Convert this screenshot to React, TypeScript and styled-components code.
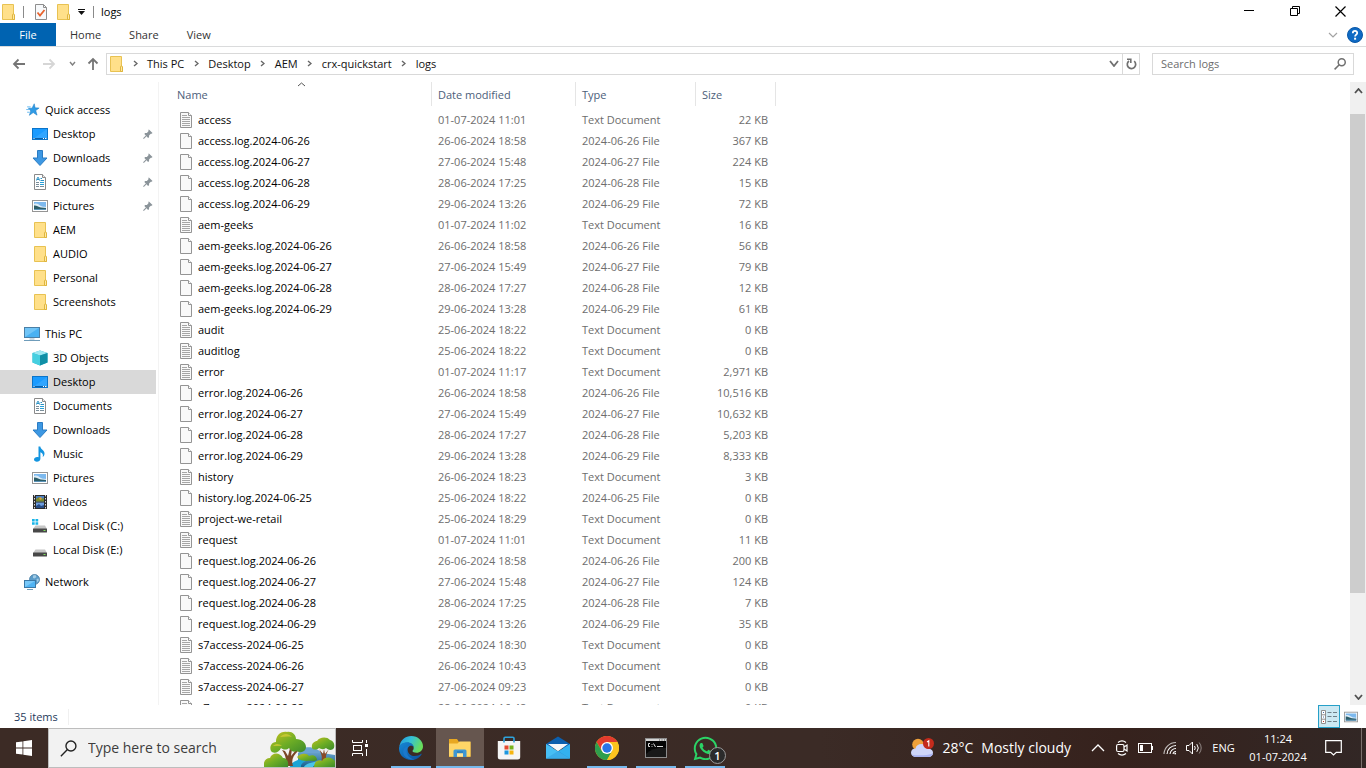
import React from "react";
import styled, { createGlobalStyle } from "styled-components";
import { FaWhatsapp } from "react-icons/fa";

const GlobalStyle = createGlobalStyle`
  *, *::before, *::after { box-sizing: border-box; }
  body {
    margin: 0;
    background: #fff;
    color: #000;
    font: 11px/16px "Open Sans", "Noto Sans", sans-serif;
  }
  button, input { font: inherit; color: inherit; }
  button { border: 0; padding: 0; background: none; }
  svg { display: block; flex: none; }
`;

const Shell = styled.div`
  display: flex;
  flex-direction: column;
  height: 100vh;
  overflow: hidden;
`;

/* ---------- title bar ---------- */

const TitleBar = styled.header`
  display: flex;
  align-items: center;
  height: 23px;
  flex: none;
`;

const QuickTools = styled.div`
  display: flex;
  align-items: center;
  flex: 1;
`;

const QuickButton = styled.button<{ $w: number; $gap?: number }>`
  display: flex;
  justify-content: center;
  width: ${(p) => p.$w}px;
  margin-right: ${(p) => p.$gap ?? 0}px;
`;

const Divider = styled.span`
  width: 1px;
  height: 12px;
  background: #8a8a8a;
`;

const WindowTitle = styled.h1`
  margin: 0 0 0 7px;
  font-size: 11px;
  line-height: 16px;
  font-weight: 400;
`;

const CaptionButton = styled.button`
  display: flex;
  align-items: center;
  justify-content: center;
  width: 46px;
  height: 20px;
  &:last-child { margin-right: 2px; }
`;

/* ---------- ribbon tabs ---------- */

const Ribbon = styled.nav`
  display: flex;
  align-items: center;
  flex: none;
  height: 24px;
  border-bottom: 1px solid #dadbdc;
`;

const RibbonTab = styled.button<{ $primary?: boolean }>`
  height: 23px;
  min-width: ${(p) => (p.$primary ? 56 : 0)}px;
  padding: 0 14px;
  color: ${(p) => (p.$primary ? "#fff" : "#333")};
  background: ${(p) => (p.$primary ? "#0063b1" : "transparent")};
`;

const RibbonEnd = styled.div`
  display: flex;
  align-items: center;
  gap: 9px;
  margin-left: auto;
  padding-right: 3px;
`;

/* ---------- address row ---------- */

const AddressRow = styled.div`
  display: flex;
  align-items: center;
  flex: none;
  height: 35px;
  padding: 0 12px 2px 0;
`;

const NavButtons = styled.div`
  display: flex;
  align-items: center;
  width: 106px;
  padding-left: 12px;
`;

const NavButton = styled.button<{ $gap?: number }>`
  margin-right: ${(p) => p.$gap ?? 0}px;
`;

const AddressBox = styled.div`
  display: flex;
  align-items: center;
  flex: 1;
  height: 22px;
  border: 1px solid #d9d9d9;
`;

const Crumbs = styled.ol`
  display: flex;
  align-items: center;
  flex: 1;
  margin: 0;
  padding: 0 0 0 3px;
  list-style: none;
`;

const Crumb = styled.li`
  display: flex;
  align-items: center;
`;

const CrumbArrow = styled.span`
  display: flex;
  justify-content: center;
  width: 24px;
`;

const CrumbLink = styled.a`
  color: #111;
  text-decoration: none;
`;

const BoxButton = styled.button<{ $line?: boolean }>`
  display: flex;
  align-items: center;
  justify-content: center;
  width: ${(p) => (p.$line ? 17 : 16)}px;
  height: 20px;
  border-left: ${(p) => (p.$line ? "1px solid #d9d9d9" : "0")};
`;

const SearchBox = styled.label`
  display: flex;
  align-items: center;
  width: 202px;
  height: 22px;
  margin-left: 12px;
  padding: 0 7px 0 8px;
  border: 1px solid #d9d9d9;
`;

const SearchInput = styled.input`
  flex: 1;
  min-width: 0;
  padding: 0;
  border: 0;
  outline: 0;
  background: none;
  &::placeholder { color: #6d6d6d; opacity: 1; }
`;

/* ---------- body ---------- */

const Body = styled.main`
  display: flex;
  flex: 1;
  min-height: 0;
`;

const Sidebar = styled.nav`
  flex: none;
  width: 159px;
  padding: 16px 2px 0 0;
  border-right: 1px solid #f3f3f3;
  overflow: hidden;
`;

const SideGroup = styled.ul`
  margin: 0 0 8px;
  padding: 0;
  list-style: none;
`;

const SideLink = styled.a<{ $root?: boolean; $selected?: boolean }>`
  display: flex;
  align-items: center;
  height: 24px;
  padding: 0 3px 0 ${(p) => (p.$root ? 24 : 32)}px;
  color: #000;
  text-decoration: none;
  background: ${(p) => (p.$selected ? "#d9d9d9" : "transparent")};
`;

const SideLabel = styled.span`
  flex: 1;
  padding-left: 5px;
  white-space: nowrap;
`;

const FilePane = styled.section`
  flex: 1;
  min-width: 0;
  overflow: hidden;
`;

const FileTable = styled.table`
  width: 617px;
  table-layout: fixed;
  border-collapse: collapse;
`;

const HeadCell = styled.th<{ $w: number }>`
  position: relative;
  width: ${(p) => p.$w}px;
  height: 27px;
  padding: 0 0 3px;
  font-weight: 400;
  text-align: left;
  color: #4c607a;
`;

const HeadLabel = styled.div<{ $indent?: number }>`
  height: 24px;
  padding-left: ${(p) => p.$indent ?? 6}px;
  line-height: 26px;
  border-right: 1px solid #e5e5e5;
`;

const SortMark = styled.span`
  position: absolute;
  top: 0;
  left: 138px;
`;

const Row = styled.tr`
  height: 21px;
`;

const Cell = styled.td<{ $right?: boolean }>`
  padding: 0 ${(p) => (p.$right ? 8 : 0)}px 0 6px;
  text-align: ${(p) => (p.$right ? "right" : "left")};
  color: #6d6d6d;
  white-space: nowrap;
`;

const FileName = styled.div`
  display: flex;
  align-items: center;
  gap: 6px;
  padding-left: 15px;
  color: #000;
`;

const Scrollbar = styled.div`
  display: flex;
  flex-direction: column;
  flex: none;
  width: 16px;
  background: #f0f0f0;
`;

const ScrollButton = styled.button`
  display: flex;
  align-items: center;
  justify-content: center;
  height: 17px;
`;

const ScrollSpace = styled.div<{ $part: number }>`
  flex: ${(p) => p.$part} 0 0;
`;

const ScrollThumb = styled.div`
  flex: 479 0 0;
  margin-right: 1px;
  background: #cdcdcd;
`;

/* ---------- status bar ---------- */

const StatusBar = styled.footer`
  display: flex;
  align-items: center;
  flex: none;
  height: 23px;
  padding: 0 8px 0 14px;
  color: #1e395b;
`;

const StatusText = styled.span`
  padding-right: 10px;
  border-right: 1px solid #f0f0f0;
`;

const ViewButtons = styled.div`
  display: flex;
  align-items: center;
  gap: 3px;
  margin-left: auto;
`;

const ViewButton = styled.button<{ $on?: boolean }>`
  display: flex;
  align-items: center;
  justify-content: center;
  width: ${(p) => (p.$on ? 22 : 15)}px;
  height: 23px;
  border: ${(p) => (p.$on ? "1px solid #26a0c8" : "0")};
  background: ${(p) => (p.$on ? "#cce8f2" : "transparent")};
`;

/* ---------- taskbar ---------- */

const Taskbar = styled.footer`
  display: flex;
  flex: none;
  height: 40px;
  color: #fff;
  background: linear-gradient(90deg, #3c2b25 0%, #3b2b26 60%, #36221d 82%, #322725 100%);
`;

const Tile = styled.button<{ $active?: boolean; $open?: boolean }>`
  position: relative;
  display: flex;
  align-items: center;
  justify-content: center;
  width: 48px;
  background: ${(p) => (p.$active ? "#66564f" : "transparent")};
  &::after {
    content: "";
    position: absolute;
    bottom: 0;
    left: ${(p) => (p.$active ? 0 : 4)}px;
    right: ${(p) => (p.$active ? 0 : 4)}px;
    height: 2px;
    background: ${(p) => (p.$open || p.$active ? "#76b9ed" : "transparent")};
  }
`;

const AppTiles = styled.div`
  display: flex;
  gap: 1px;
  margin-left: 3px;
`;

const TaskSearch = styled.label`
  display: flex;
  align-items: center;
  width: 288px;
  padding-left: 11px;
  border: 1px solid #bdbdbd;
  background: #f2f2f2;
  overflow: hidden;
`;

const TaskInput = styled.input`
  flex: 1;
  min-width: 0;
  padding: 0 0 0 11px;
  border: 0;
  outline: 0;
  background: none;
  font-size: 14px;
  line-height: 20px;
  &::placeholder { color: #3d3d3d; opacity: 1; }
`;

const Badge = styled.span`
  position: absolute;
  right: 3px;
  bottom: 4px;
  width: 17px;
  height: 17px;
  border: 1px solid #9a9a9a;
  border-radius: 50%;
  background: #2b2b2b;
  color: #fff;
  font-size: 11px;
  line-height: 15px;
  font-weight: 600;
  text-align: center;
`;

const Tray = styled.div`
  display: flex;
  align-items: stretch;
  margin-left: auto;
`;

const TrayButton = styled.button<{ $w?: number }>`
  display: flex;
  align-items: center;
  justify-content: center;
  width: ${(p) => (p.$w ? p.$w + "px" : "auto")};
`;

const Weather = styled(TrayButton)`
  gap: 8px;
  margin-right: 15px;
  font-size: 14px;
  line-height: 20px;
`;

const Clock = styled.div`
  display: flex;
  flex-direction: column;
  align-items: center;
  justify-content: center;
  width: 74px;
  line-height: 18px;
`;

const ShowDesktop = styled.button`
  width: 5px;
  margin-left: 9px;
  border-left: 1px solid #7a706d;
`;

/* ---------- icons ---------- */

const FolderIcon = ({ w = 16 }: { w?: 13 | 16 }) => (
  <svg width={w} height="16" viewBox={w === 13 ? "2 0 13 16" : "0 0 16 16"}>
    <path d="M2.500.5h11v11h1v4h-12z" fill="#ffe08a" stroke="#e8c252" />
    <path d="M12.500 15.500v-4.500q0-1 1-1t1 1v4.500z" fill="#ffe9a6" stroke="#dfb53d" />
  </svg>
);

const CheckDocIcon = () => (
  <svg width="12" height="16" viewBox="0 0 12 16">
    <path d="M.5.5h8l3 3v12H.5z" fill="#f7f9fb" stroke="#8e8e8e" />
    <path d="M8.500.5v3h3" fill="none" stroke="#8e8e8e" />
    <path d="M2.500 8.500l2.500 3 4.500-5.500" fill="none" stroke="#e8622c" strokeWidth="1.800" />
  </svg>
);

const Chevron = ({
  dir, w = 7, color = "#666", weight = 1.4, h,
}: { dir: "up" | "down" | "right"; w?: number; h?: number; color?: string; weight?: number }) => {
  const half = w / 2;
  const depth = h ?? Math.ceil(half) + 1;
  const m = 1;
  if (dir === "right") {
    return (
      <svg width={depth} height={w} viewBox={`0 0 ${depth} ${w}`}>
        <path d={`M${m} ${m}L${depth - m} ${half}L${m} ${w - m}`} fill="none" stroke={color} strokeWidth={weight} />
      </svg>
    );
  }
  const [a, b] = dir === "up" ? [depth - m, m] : [m, depth - m];
  return (
    <svg width={w} height={depth} viewBox={`0 0 ${w} ${depth}`}>
      <path d={`M${m} ${a}L${half} ${b}L${w - m} ${a}`} fill="none" stroke={color} strokeWidth={weight} />
    </svg>
  );
};

const ArrowIcon = ({ dir, color }: { dir: "left" | "right" | "up"; color: string }) => {
  const turn = { left: 0, up: 90, right: 180 }[dir];
  return (
    <svg width="14" height="14" viewBox="0 0 14 14">
      <path
        d="M13 7H2M6.500 2.500L2 7l4.500 4.500"
        transform={`rotate(${turn} 7 7)`}
        fill="none"
        stroke={color}
        strokeWidth="1.800"
      />
    </svg>
  );
};

const RefreshIcon = () => (
  <svg width="11" height="12" viewBox="0 0 11 12">
    <path d="M8.200 3.200A4.200 4.200 0 1 1 3 3" fill="none" stroke="#707070" strokeWidth="1.700" />
    <path d="M1 1.200h3.800V5" fill="none" stroke="#707070" strokeWidth="1.600" />
  </svg>
);

const LensIcon = ({ size, color, weight }: { size: number; color: string; weight: number }) => (
  <svg width={size} height={size} viewBox="0 0 16 16">
    <circle cx="10.300" cy="5.700" r="4.700" fill="none" stroke={color} strokeWidth={weight} />
    <path d="M7 9L.8 15.200" stroke={color} strokeWidth={weight} />
  </svg>
);

const HelpIcon = () => (
  <svg width="16" height="16" viewBox="0 0 16 16">
    <circle cx="8" cy="8" r="7.500" fill="#0f6ac4" stroke="#0a58a8" />
    <path d="M5.800 6.200C5.800 3.200 10.300 3.300 10.200 6c0 1.600-2.100 1.700-2.100 3.500" fill="none" stroke="#fff" strokeWidth="1.800" />
    <rect x="7.100" y="10.700" width="2" height="2" fill="#fff" />
  </svg>
);

const StarIcon = () => (
  <svg width="16" height="16" viewBox="-2 -1 18 18">
    <path d="M9.500 1l1 4.600 4.500.2-3.800 2.900 1.500 5.100-4.300-2.900L4 14l1.600-5L3 6h4z" fill="#2f9be6" stroke="#1c7cc4" strokeWidth=".6" />
    <path d="M1.500 4.500h4M.5 7.500h4M1.500 10.500h3" stroke="#5bb5f0" />
  </svg>
);

const DesktopIcon = () => (
  <svg width="16" height="16" viewBox="0 0 16 16">
    <rect x=".5" y="2.500" width="15" height="11" fill="#1a9bff" stroke="#0b74c9" />
    <path d="M1 13L15 3v9H1z" fill="#45b0ff" opacity=".5" />
    <path d="M1 12.500h14" stroke="#0a5fa8" />
    <path d="M1.500 12.500h1M11 12.500h1M13 12.500h1.500" stroke="#fff" />
  </svg>
);

const DownloadIcon = () => (
  <svg width="16" height="16" viewBox="0 0 16 16">
    <path d="M5.500.5h5v7.500h4.500L8 15.500 1 8h4.500z" fill="#3d98e3" stroke="#2b7cc4" />
  </svg>
);

const DocumentIcon = () => (
  <svg width="16" height="16" viewBox="0 0 16 16">
    <path d="M2.500.5h8l3 3v12h-11z" fill="#fff" stroke="#8a8a8a" />
    <path d="M10.500.5v3h3" fill="#eee" stroke="#8a8a8a" />
    <path d="M4.500 6.500l1-3h1l1 3M5 5.500h2M8.500 4.500h1.500M8.500 6.500h3.500" fill="none" stroke="#2a91c4" />
    <path d="M4 8.500h3M4 10.500h3M4 12.500h3M8 12.500h4" stroke="#7a8d99" />
    <path d="M8 8.500h4M8 10.500h4" stroke="#28a0d8" />
  </svg>
);

const PictureIcon = ({ w = 16 }: { w?: number }) => (
  <svg width={w} height={w} viewBox="0 0 16 16">
    <rect x=".5" y="2.500" width="15" height="11" fill="#fff" stroke="#959595" />
    <rect x="2" y="4" width="12" height="8" fill="#7db9ee" />
    <path d="M2 6c3-1 4 0 6 1.500s4 1 6 1.500v1H2z" fill="#dcecf7" />
    <path d="M2 7.500c2-.5 4 1 7 2l5 .5v2H2z" fill="#2c5d68" />
    <path d="M2 11h12v1H2z" fill="#5a93b8" />
  </svg>
);

const ThisPcIcon = () => (
  <svg width="16" height="16" viewBox="0 0 16 16">
    <rect x=".5" y="1.500" width="15" height="10" fill="#49b1f2" stroke="#4a7fa6" />
    <path d="M1 11L15 2H1z" fill="#8cd2fa" opacity=".6" />
    <path d="M5.500 12h5v2h-5z" fill="#c9d9e4" />
    <path d="M0 14.500h16" stroke="#6f9cba" />
  </svg>
);

const CubeIcon = () => (
  <svg width="16" height="16" viewBox="0 0 16 16">
    <path d="M8 .5l7.500 2.500v9.500L8 15.500.5 12.500V3z" fill="#2ab8cf" />
    <path d="M.5 3L8 .5 15.500 3 8 5.500z" fill="#9fe8f2" />
    <path d="M.5 3L8 5.500v10L.5 12.500z" fill="#46cfe0" />
    <path d="M8 5.500L15.500 3v9.500L8 15.500z" fill="#108fa6" />
  </svg>
);

const MusicIcon = () => (
  <svg width="16" height="16" viewBox="0 0 16 16">
    <path d="M6.500.5h1.800c.3 3 4.700 3.800 4.200 7.500-.2 1.500-1 2.500-1.800 3 .8-2.500-.2-4-2.300-4.800v6.500c0 2-1.800 3-3.500 3-1.600 0-2.900-.8-2.900-2.200 0-2 2.500-3 4.500-2.300z" fill="#1495e0" />
  </svg>
);

const VideoIcon = () => (
  <svg width="16" height="16" viewBox="0 0 16 16">
    <rect x="1" y="1" width="14" height="14" fill="#2c2c2c" />
    <path d="M2.500 1v14M13.500 1v14" stroke="#ddd" strokeDasharray="1.500 1.500" />
    <rect x="4" y="2" width="8" height="5.500" fill="#4b7fc2" />
    <rect x="4" y="8.500" width="8" height="5.500" fill="#6c9de0" />
    <path d="M4 5l3-2 2 2 3-1v3.500H4z" fill="#7c8a2c" />
    <path d="M4 12l3-2 2 2 3-1v3H4z" fill="#274c86" />
    <circle cx="8.500" cy="4.500" r="1.200" fill="#d9a13a" />
  </svg>
);

const DiskIcon = ({ system }: { system?: boolean }) => (
  <svg width="16" height="16" viewBox="0 0 16 16">
    {system && <path d="M0 1h2.700v2.500H0zM3.500 1h2.700v2.500H3.500zM0 4.300h2.700v2.500H0zM3.500 4.300h2.700v2.500H3.500z" fill="#19b5e8" />}
    <path d="M3.500 7.500h9.500L15 11H1z" fill="#c6c6c6" />
    <rect x="1" y="10.500" width="14" height="4" rx=".6" fill="#484848" />
    <rect x="11.500" y="12" width="2" height="1" fill="#7ee05c" />
  </svg>
);

const NetworkIcon = () => (
  <svg width="16" height="16" viewBox="0 0 16 16">
    <circle cx="10.500" cy="5.500" r="5" fill="#5b9cc9" stroke="#4b7fa4" strokeWidth=".8" />
    <path d="M9 1.500l2.500-.5 1 2-2 1.500-1.500-.5zM12.500 5l2-.5.3 2-1.500 2z" fill="#b5d8ec" opacity=".8" />
    <rect x=".5" y="6.500" width="11" height="7" fill="#4fb3f4" stroke="#3a78a6" />
    <path d="M1 13L11 7H1z" fill="#95d6fb" opacity=".6" />
    <path d="M3 15.500h6" stroke="#6f9cba" />
  </svg>
);

const PinIcon = () => (
  <svg width="10" height="10" viewBox="0 0 11 11">
    <path d="M6.500.5l4 4-1 .8-.8-.2L6.800 7l-.2 2-1 .8L1.500 5.400l.8-1 2-.1L6.200 2.200 5.800 1.200z" fill="#8b949a" />
    <path d="M3.500 7.500L.5 10.500" stroke="#8b949a" strokeWidth="1.200" />
  </svg>
);

const FileIcon = ({ text }: { text: boolean }) => (
  <svg width="12" height="16" viewBox="0 0 12 16">
    <path d="M.5.5h8l3 3v12H.5z" fill="#f9f9f9" stroke="#949494" />
    <path d="M8.500.5v3h3" fill="#fff" stroke="#949494" />
    {text && <path d="M2 3.500h5M2 5.500h8M2 7.500h8M2 9.500h8M2 11.500h8M2 13.500h8" stroke="#a6a6a6" />}
  </svg>
);

const DetailsIcon = () => (
  <svg width="17" height="14" viewBox="0 0 17 14">
    <path d="M.5.500h4v13h-4zM.5 4.800h4M.5 9.200h4" fill="#fff" stroke="#8f8f8f" />
    <path d="M2 2.500h1M2 7h1" stroke="#4a6fa5" />
    <path d="M2 11.500h1" stroke="#c0392b" />
    <path d="M6.500 2.500h4M12 2.500h4M6.500 6.500h4M12 6.500h4M6.500 11.500h4M12 11.500h4" stroke="#6f7f88" />
  </svg>
);

const StartIcon = () => (
  <svg width="16" height="16" viewBox="0 0 16 16" fill="#fff">
    <path d="M0 2.300L6.500 1.400v6.100H0zM7.300 1.300L16 0v7.500H7.300zM0 8.400h6.500v6.200L0 13.700zM7.300 8.400H16V16l-8.700-1.300z" />
  </svg>
);

const TreesArt = () => (
  <svg width="71" height="38" viewBox="0 0 71 38">
    <defs>
      <linearGradient id="leaf" x1="0" y1="0" x2="1" y2="1">
        <stop offset="0" stopColor="#c9bf1e" />
        <stop offset=".5" stopColor="#6fae25" />
        <stop offset="1" stopColor="#3c8a2b" />
      </linearGradient>
      <linearGradient id="water" x1="0" y1="0" x2="0" y2="1">
        <stop offset="0" stopColor="#7fb4dc" />
        <stop offset="1" stopColor="#14608f" />
      </linearGradient>
    </defs>
    <path d="M34 38V24c6-7 18-5 24 0l13 2v12z" fill="url(#water)" />
    <path d="M37 20c8-4 16-1 21 4H38z" fill="#6aa3d2" />
    <path d="M26 38c0-7 16-8 14-12l6 1c2 4-10 5-9 11z" fill="#1ba4d6" />
    <path d="M40 38c2-5 14-5 18-7l4 2c-6 2-12 2-13 5z" fill="#48c4ea" />
    <path d="M20 37c3-6 2-10-2-16l3 1 3 5 2-8 2 1-1 7 5-6 2 1c-5 5-7 9-5 15z" fill="#7a4526" />
    <path d="M57 33c2-5 0-9-2-13l4 5 1-5 1 5 4-5c-3 5-4 8-2 13z" fill="#8b4a28" />
    <path d="M7 22c-2-5 1-9 5-9 0-6 4-11 11-10 5-1 9 3 9 7 6 0 10 4 10 8s-5 7-9 4c-3 2-6 0-8-3-3 3-7 1-8 0-2 5-8 6-10 3z" fill="url(#leaf)" />
    <path d="M16 8c4-4 8-4 12 0-4-1-8 0-12 0zM9 17c3-3 7-2 9 0z" fill="#e2d23b" opacity=".6" />
    <path d="M48 19c-1-5 3-7 5-7 2-4 10-5 13-1 4 1 5 5 4 8-2 3-6 2-8 0-3 2-5 1-7 0-2 2-6 2-7 0z" fill="url(#leaf)" />
    <path d="M0 38c-1-6 2-9 6-9 2-6 10-6 13 0 4 0 6 4 5 9z" fill="url(#leaf)" />
    <path d="M33 28c4-4 10-4 12-1 5-2 8 1 8 4-3 2-8 0-10 1-4 0-8-1-10-4z" fill="url(#leaf)" />
    <path d="M50 38c0-5 4-8 8-6 3-5 10-4 13 0v6z" fill="url(#leaf)" />
  </svg>
);

const TaskViewIcon = () => (
  <svg width="16" height="16" viewBox="0 0 16 16" fill="none" stroke="#fff">
    <path d="M.5 0v2.500h10V0M.5 16v-2.500h10V16" />
    <rect x="1.500" y="5.500" width="8" height="5" />
    <path d="M14.500 0v3M14.500 9v7" />
    <rect x="13" y="4" width="3" height="3" fill="#fff" stroke="none" />
  </svg>
);

const EdgeIcon = () => (
  <svg width="24" height="24" viewBox="0 0 24 24">
    <defs>
      <linearGradient id="edgeTop" x1="0" y1="0" x2="1" y2=".4">
        <stop offset="0" stopColor="#2196e3" />
        <stop offset=".5" stopColor="#35c1d6" />
        <stop offset="1" stopColor="#68dd5c" />
      </linearGradient>
      <linearGradient id="edgeLow" x1="0" y1="0" x2="1" y2="1">
        <stop offset="0" stopColor="#1587d6" />
        <stop offset="1" stopColor="#0c4f9b" />
      </linearGradient>
    </defs>
    <path d="M.3 10.500C1.500 4 6.500 0 12.200 0 19 0 24 5 24 10.300c0 4-3 6.500-6.500 6.500-2.300 0-4-.8-4-1.700s1.200-1.200 1.200-3.200C14.700 9 12 6.800 8.700 6.800 4.800 6.800 1.500 8.500.3 10.500z" fill="url(#edgeTop)" />
    <path d="M0 12C.3 8.500 4 6.300 8.200 6.300c3.500 0 6.300 2.300 6.500 5-1.200-1.500-2.700-1.800-4-1.200-4 2-2.200 10 4.800 10 3 0 5-1 6.500-2.300.6-.3.800.2.500.7C20.500 22 16.500 24 12 24 5 24-.3 18.800 0 12z" fill="url(#edgeLow)" />
    <path d="M8.500 11.500C6 16 9 22.500 15.500 23.300 11 24.500 5.500 22 4.300 17.300 3.500 13.500 6 10.500 10 10c-.6.400-1.100.9-1.500 1.500z" fill="#1b78cc" />
  </svg>
);

const ExplorerIcon = () => (
  <svg width="24" height="24" viewBox="0 0 24 24">
    <path d="M1 3h8l2 3h11.500v15H1z" fill="#e8a821" />
    <path d="M1 7.500h8.500l2-2H22.500v15H1z" fill="#ffd667" />
    <path d="M5.500 21v-6q0-1.500 1.500-1.500h10q1.500 0 1.500 1.500v6h-3.500v-3.500h-6V21z" fill="#3f97d3" />
    <path d="M9 17.500h6v3H9z" fill="#ffe7a0" />
    <path d="M9 16h6" stroke="#1e73b0" />
  </svg>
);

const StoreIcon = () => (
  <svg width="24" height="24" viewBox="0 0 24 24">
    <path d="M.8 5h22.400v16q0 2.500-2.500 2.500H3.300Q.8 23.500.8 21z" fill="#f5f5f5" />
    <path d="M7 6.500V2.500Q7 1.300 8.200 1.300h7.600q1.200 0 1.200 1.200v4" fill="none" stroke="#2ea3dc" strokeWidth="1.600" />
    <rect x="7.500" y="9.500" width="4" height="4" fill="#e64a2e" />
    <rect x="12.500" y="9.500" width="4" height="4" fill="#77b41c" />
    <rect x="7.500" y="14.500" width="4" height="4" fill="#1c97df" />
    <rect x="12.500" y="14.500" width="4" height="4" fill="#f6b50f" />
  </svg>
);

const MailIcon = () => (
  <svg width="24" height="24" viewBox="0 0 24 24">
    <path d="M0 8L12 .5 24 8v4H0z" fill="#0c5fae" />
    <path d="M0 8l12 7.500L24 8v14.500H0z" fill="#33b1ef" />
    <path d="M2 8h20l-10 7.200z" fill="#f6f7f9" />
    <path d="M0 22.500L12 15l12 7.500z" fill="#1b8fda" />
    <path d="M0 8l24 14.500H0z" fill="#5ccbf9" opacity=".5" />
  </svg>
);

const ChromeIcon = () => (
  <svg width="24" height="24" viewBox="0 0 24 24">
    <circle cx="12" cy="12" r="12" fill="#fcc31e" />
    <path d="M12 6h10.400A12 12 0 0 0 1.600 6L6.800 15z" fill="#e33b2e" />
    <path d="M1.600 6A12 12 0 0 0 12 24l5.200-9-5.200 3-5.200-3z" fill="#2f9e4d" />
    <path d="M22.400 6A12 12 0 0 1 12 24l5.200-9V9L12 6z" fill="#fcc31e" />
    <circle cx="12" cy="12" r="6" fill="#fff" />
    <circle cx="12" cy="12" r="4.700" fill="#2a74e6" />
  </svg>
);

const TerminalIcon = () => (
  <svg width="22" height="20" viewBox="0 0 22 20">
    <rect x=".5" y=".5" width="21" height="19" fill="#050505" stroke="#8d8d8d" />
    <rect x="1" y="1" width="20" height="2" fill="#d5d5d5" />
    <path d="M14 2h1M16.500 2h1M19 2h1" stroke="#555" />
    <path d="M1 16c5-5 12-7 20-6v9H1z" fill="#191919" />
    <path d="M5 5.500H3.500v3H5M7 6v.8M7 8v.8M8.500 5.500l2 3.500M12 8.500h6" fill="none" stroke="#ddd" />
  </svg>
);

const WeatherIcon = () => (
  <svg width="23" height="20" viewBox="0 0 23 20">
    <circle cx="7" cy="6.500" r="5.800" fill="#f0a13a" />
    <path d="M5 19c-3 0-5-1.800-5-4.300C0 12 2 10.500 4.500 10.500 5 7.500 7.500 6 10.300 6c3 0 5.200 1.800 6 4.500 3.500 0 5.700 1.700 5.700 4.300 0 2.500-2 4.200-4.500 4.200z" fill="#cfd5f8" />
    <path d="M1 16.500c5 1.500 15 1 21-1-.4 2.200-2.200 3.500-4.500 3.500H5c-2 0-3.500-1-4-2.500z" fill="#aab3f1" />
    <circle cx="17.500" cy="5.500" r="5.500" fill="#c42b1c" />
    <path d="M16 4l1.800-1.200V8.500" fill="none" stroke="#fff" strokeWidth="1.100" />
  </svg>
);

const CameraIcon = () => (
  <svg width="12" height="16" viewBox="0 0 12 16" fill="none" stroke="#fff" strokeWidth="1.200">
    <path d="M2 2.500Q6-.8 10 2.500M2 13.500q4 3.300 8 0" />
    <rect x=".6" y="4.500" width="7.400" height="7" rx="1.500" />
    <path d="M8 7l3-2v6L8 9" />
  </svg>
);

const BatteryIcon = () => (
  <svg width="16" height="10" viewBox="0 0 16 10">
    <rect x=".5" y=".5" width="13" height="9" fill="none" stroke="#fff" />
    <rect x="2" y="2" width="3" height="6" fill="#fff" />
    <path d="M14.500 3v4" stroke="#fff" />
  </svg>
);

const WifiIcon = () => (
  <svg width="14" height="14" viewBox="0 0 14 14" fill="none" stroke="#fff" strokeWidth="1.100">
    <path d="M1 13A12 12 0 0 1 13 1.500" opacity=".7" />
    <path d="M4 13A9 9 0 0 1 13 4.500" />
    <path d="M7 13A6 6 0 0 1 13 7.500" />
    <path d="M10 13a3 3 0 0 1 3-2.500" />
    <circle cx="12.200" cy="12.600" r=".9" fill="#fff" stroke="none" />
  </svg>
);

const VolumeIcon = () => (
  <svg width="17" height="14" viewBox="0 0 17 14" fill="none" stroke="#fff">
    <path d="M.5 4.500h2.500l3.500-3.500v12L3 9.500H.5z" />
    <path d="M8.500 5q1.500 2 0 4" />
    <path d="M10.800 3.200q3 3.800 0 7.600" />
    <path d="M13.200 1.500q4 5.500 0 11" opacity=".45" />
  </svg>
);

const NoticeIcon = () => (
  <svg width="17" height="16" viewBox="0 0 17 16">
    <path d="M.7.7h15.600v11.600h-5L8.500 15l-2.800-2.700h-5z" fill="none" stroke="#fff" strokeWidth="1.200" />
  </svg>
);

/* ---------- data ---------- */

type SideItem = { label: string; icon: React.ReactNode; pinned?: boolean; selected?: boolean };

const sideGroups: SideItem[][] = [
  [
    { label: "Quick access", icon: <StarIcon /> },
    { label: "Desktop", icon: <DesktopIcon />, pinned: true },
    { label: "Downloads", icon: <DownloadIcon />, pinned: true },
    { label: "Documents", icon: <DocumentIcon />, pinned: true },
    { label: "Pictures", icon: <PictureIcon />, pinned: true },
    { label: "AEM", icon: <FolderIcon /> },
    { label: "AUDIO", icon: <FolderIcon /> },
    { label: "Personal", icon: <FolderIcon /> },
    { label: "Screenshots", icon: <FolderIcon /> },
  ],
  [
    { label: "This PC", icon: <ThisPcIcon /> },
    { label: "3D Objects", icon: <CubeIcon /> },
    { label: "Desktop", icon: <DesktopIcon />, selected: true },
    { label: "Documents", icon: <DocumentIcon /> },
    { label: "Downloads", icon: <DownloadIcon /> },
    { label: "Music", icon: <MusicIcon /> },
    { label: "Pictures", icon: <PictureIcon /> },
    { label: "Videos", icon: <VideoIcon /> },
    { label: "Local Disk (C:)", icon: <DiskIcon system /> },
    { label: "Local Disk (E:)", icon: <DiskIcon /> },
  ],
  [{ label: "Network", icon: <NetworkIcon /> }],
];

const TXT = "Text Document";

const files: [name: string, modified: string, type: string, size: string][] = [
  ["access", "01-07-2024 11:01", TXT, "22 KB"],
  ["access.log.2024-06-26", "26-06-2024 18:58", "2024-06-26 File", "367 KB"],
  ["access.log.2024-06-27", "27-06-2024 15:48", "2024-06-27 File", "224 KB"],
  ["access.log.2024-06-28", "28-06-2024 17:25", "2024-06-28 File", "15 KB"],
  ["access.log.2024-06-29", "29-06-2024 13:26", "2024-06-29 File", "72 KB"],
  ["aem-geeks", "01-07-2024 11:02", TXT, "16 KB"],
  ["aem-geeks.log.2024-06-26", "26-06-2024 18:58", "2024-06-26 File", "56 KB"],
  ["aem-geeks.log.2024-06-27", "27-06-2024 15:49", "2024-06-27 File", "79 KB"],
  ["aem-geeks.log.2024-06-28", "28-06-2024 17:27", "2024-06-28 File", "12 KB"],
  ["aem-geeks.log.2024-06-29", "29-06-2024 13:28", "2024-06-29 File", "61 KB"],
  ["audit", "25-06-2024 18:22", TXT, "0 KB"],
  ["auditlog", "25-06-2024 18:22", TXT, "0 KB"],
  ["error", "01-07-2024 11:17", TXT, "2,971 KB"],
  ["error.log.2024-06-26", "26-06-2024 18:58", "2024-06-26 File", "10,516 KB"],
  ["error.log.2024-06-27", "27-06-2024 15:49", "2024-06-27 File", "10,632 KB"],
  ["error.log.2024-06-28", "28-06-2024 17:27", "2024-06-28 File", "5,203 KB"],
  ["error.log.2024-06-29", "29-06-2024 13:28", "2024-06-29 File", "8,333 KB"],
  ["history", "26-06-2024 18:23", TXT, "3 KB"],
  ["history.log.2024-06-25", "25-06-2024 18:22", "2024-06-25 File", "0 KB"],
  ["project-we-retail", "25-06-2024 18:29", TXT, "0 KB"],
  ["request", "01-07-2024 11:01", TXT, "11 KB"],
  ["request.log.2024-06-26", "26-06-2024 18:58", "2024-06-26 File", "200 KB"],
  ["request.log.2024-06-27", "27-06-2024 15:48", "2024-06-27 File", "124 KB"],
  ["request.log.2024-06-28", "28-06-2024 17:25", "2024-06-28 File", "7 KB"],
  ["request.log.2024-06-29", "29-06-2024 13:26", "2024-06-29 File", "35 KB"],
  ["s7access-2024-06-25", "25-06-2024 18:30", TXT, "0 KB"],
  ["s7access-2024-06-26", "26-06-2024 10:43", TXT, "0 KB"],
  ["s7access-2024-06-27", "27-06-2024 09:23", TXT, "0 KB"],
  ["s7access-2024-06-28", "28-06-2024 16:48", TXT, "0 KB"],
];

const crumbs = ["This PC", "Desktop", "AEM", "crx-quickstart", "logs"];

/* ---------- page ---------- */

export default function App() {
  return (
    <Shell>
      <GlobalStyle />
      <TitleBar>
        <QuickTools>
          <QuickButton $w={16} $gap={7} aria-label="Window menu"><FolderIcon /></QuickButton>
          <Divider />
          <QuickButton $w={33} aria-label="Properties"><CheckDocIcon /></QuickButton>
          <QuickButton $w={13} aria-label="New folder"><FolderIcon w={13} /></QuickButton>
          <QuickButton $w={23} aria-label="Customize toolbar">
            <svg width="7" height="6" viewBox="0 0 7 6"><path d="M0 0h7v1H0zM0 2h7L3.500 6z" fill="#111" /></svg>
          </QuickButton>
          <Divider />
          <WindowTitle>logs</WindowTitle>
        </QuickTools>
        <CaptionButton aria-label="Minimize">
          <svg width="10" height="11" viewBox="0 0 10 11"><path d="M0 4.500h10" stroke="#000" /></svg>
        </CaptionButton>
        <CaptionButton aria-label="Restore">
          <svg width="10" height="12" viewBox="0 0 10 12" fill="none" stroke="#000">
            <path d="M.5 2.500h7v7h-7zM2.500 2.500v-2h7v7h-2" />
          </svg>
        </CaptionButton>
        <CaptionButton aria-label="Close">
          <svg width="12" height="12" viewBox="0 0 12 12"><path d="M.5.5l10 10M10.500.5l-10 10" stroke="#000" strokeWidth="1.200" /></svg>
        </CaptionButton>
      </TitleBar>

      <Ribbon aria-label="Ribbon">
        <RibbonTab $primary>File</RibbonTab>
        <RibbonTab>Home</RibbonTab>
        <RibbonTab>Share</RibbonTab>
        <RibbonTab>View</RibbonTab>
        <RibbonEnd>
          <button aria-label="Expand ribbon"><Chevron dir="down" w={10} h={6} color="#a3a3a3" weight={1.2} /></button>
          <button aria-label="Help"><HelpIcon /></button>
        </RibbonEnd>
      </Ribbon>

      <AddressRow>
        <NavButtons>
          <NavButton $gap={16} aria-label="Back"><ArrowIcon dir="left" color="#757575" /></NavButton>
          <NavButton $gap={13} aria-label="Forward"><ArrowIcon dir="right" color="#d6d6d6" /></NavButton>
          <NavButton $gap={10} aria-label="Recent locations"><Chevron dir="down" w={7} color="#808080" /></NavButton>
          <NavButton aria-label="Up"><ArrowIcon dir="up" color="#757575" /></NavButton>
        </NavButtons>
        <AddressBox>
          <Crumbs>
            <FolderIcon w={13} />
            {crumbs.map((c) => (
              <Crumb key={c}>
                <CrumbArrow><Chevron dir="right" w={7} /></CrumbArrow>
                <CrumbLink href="#">{c}</CrumbLink>
              </Crumb>
            ))}
          </Crumbs>
          <BoxButton aria-label="Previous locations"><Chevron dir="down" w={10} h={7} color="#707070" weight={1.8} /></BoxButton>
          <BoxButton $line aria-label="Refresh"><RefreshIcon /></BoxButton>
        </AddressBox>
        <SearchBox>
          <SearchInput placeholder="Search logs" aria-label="Search logs" />
          <LensIcon size={12} color="#707070" weight={2} />
        </SearchBox>
      </AddressRow>

      <Body>
        <Sidebar aria-label="Navigation pane">
          {sideGroups.map((group) => (
            <SideGroup key={group[0].label}>
              {group.map((item, i) => (
                <li key={item.label}>
                  <SideLink href="#" $root={i === 0} $selected={item.selected}>
                    {item.icon}
                    <SideLabel>{item.label}</SideLabel>
                    {item.pinned && <PinIcon />}
                  </SideLink>
                </li>
              ))}
            </SideGroup>
          ))}
        </Sidebar>
        <FilePane>
          <FileTable>
            <thead>
              <tr>
                <HeadCell $w={273}>
                  <HeadLabel $indent={18}>Name</HeadLabel>
                  <SortMark><Chevron dir="up" w={9} h={5} color="#555" weight={1} /></SortMark>
                </HeadCell>
                <HeadCell $w={144}><HeadLabel>Date modified</HeadLabel></HeadCell>
                <HeadCell $w={120}><HeadLabel>Type</HeadLabel></HeadCell>
                <HeadCell $w={80}><HeadLabel>Size</HeadLabel></HeadCell>
              </tr>
            </thead>
            <tbody>
              {files.map(([name, modified, type, size]) => (
                <Row key={name}>
                  <Cell><FileName><FileIcon text={type === TXT} />{name}</FileName></Cell>
                  <Cell>{modified}</Cell>
                  <Cell>{type}</Cell>
                  <Cell $right>{size}</Cell>
                </Row>
              ))}
            </tbody>
          </FileTable>
        </FilePane>
        <Scrollbar>
          <ScrollButton aria-label="Scroll up"><Chevron dir="up" w={9} h={6} color="#505050" weight={1.8} /></ScrollButton>
          <ScrollSpace $part={15} />
          <ScrollThumb />
          <ScrollSpace $part={95} />
          <ScrollButton aria-label="Scroll down"><Chevron dir="down" w={9} h={6} color="#505050" weight={1.8} /></ScrollButton>
        </Scrollbar>
      </Body>

      <StatusBar>
        <StatusText>35 items</StatusText>
        <ViewButtons>
          <ViewButton $on aria-label="Details view"><DetailsIcon /></ViewButton>
          <ViewButton aria-label="Large icons view"><PictureIcon w={14} /></ViewButton>
        </ViewButtons>
      </StatusBar>

      <Taskbar>
        <Tile aria-label="Start"><StartIcon /></Tile>
        <TaskSearch>
          <LensIcon size={17} color="#222" weight={1.3} />
          <TaskInput placeholder="Type here to search" aria-label="Type here to search" />
          <TreesArt />
        </TaskSearch>
        <Tile aria-label="Task view"><TaskViewIcon /></Tile>
        <AppTiles>
          <Tile $open aria-label="Microsoft Edge"><EdgeIcon /></Tile>
          <Tile $active aria-label="File Explorer"><ExplorerIcon /></Tile>
          <Tile aria-label="Microsoft Store"><StoreIcon /></Tile>
          <Tile aria-label="Mail"><MailIcon /></Tile>
          <Tile $open aria-label="Google Chrome"><ChromeIcon /></Tile>
          <Tile $open aria-label="Command Prompt"><TerminalIcon /></Tile>
          <Tile $open aria-label="WhatsApp">
            <FaWhatsapp size={27} color="#2bd366" />
            <Badge>1</Badge>
          </Tile>
        </AppTiles>
        <Tray>
          <Weather>
            <WeatherIcon />
            <span>28°C</span>
            <span>Mostly cloudy</span>
          </Weather>
          <TrayButton $w={24} aria-label="Show hidden icons"><Chevron dir="up" w={14} h={8} color="#fff" weight={1.3} /></TrayButton>
          <TrayButton $w={24} aria-label="Meet now"><CameraIcon /></TrayButton>
          <TrayButton $w={24} aria-label="Battery"><BatteryIcon /></TrayButton>
          <TrayButton $w={24} aria-label="Network"><WifiIcon /></TrayButton>
          <TrayButton $w={24} aria-label="Volume"><VolumeIcon /></TrayButton>
          <TrayButton $w={35}>ENG</TrayButton>
          <Clock>
            <time>11:24</time>
            <time>01-07-2024</time>
          </Clock>
          <TrayButton $w={37} aria-label="Notifications"><NoticeIcon /></TrayButton>
          <ShowDesktop aria-label="Show desktop" />
        </Tray>
      </Taskbar>
    </Shell>
  );
}
